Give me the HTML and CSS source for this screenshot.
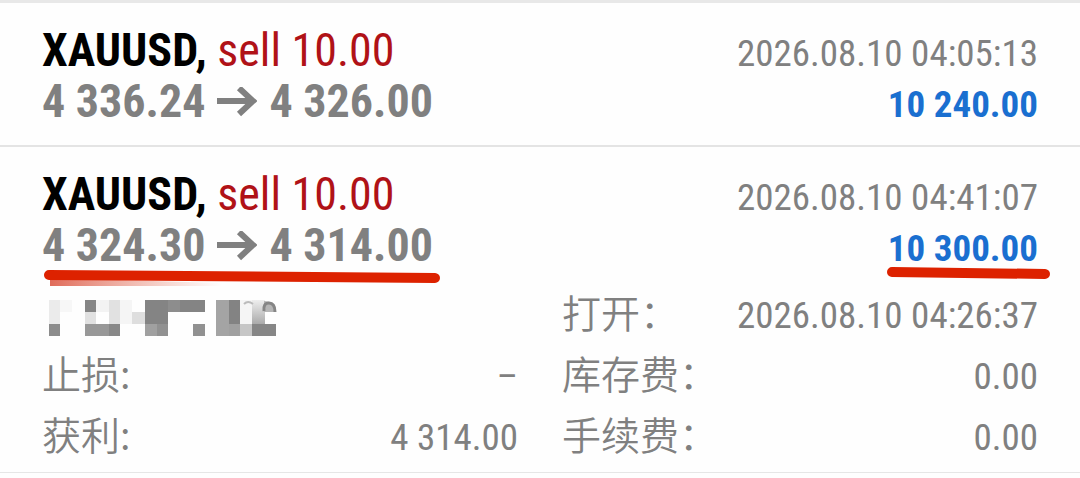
FILE: index.html
```html
<!DOCTYPE html>
<html lang="zh-CN">
<head>
    <meta charset="UTF-8">
    <meta name="viewport" content="width=device-width, initial-scale=1">
    <title>XAUUSD</title>
    <link rel="stylesheet" href="styles.css">
</head>
<body>
    <main class="history">
        <article class="deal">
            <div class="deal-row">
                <div class="symbol">XAUUSD, <span class="side">sell 10.00</span></div>
                <time class="date">2026.08.10 04:05:13</time>
            </div>
            <div class="deal-row">
                <div class="prices">
                    <span>4 336.24</span>
                    <svg class="arrow" viewBox="0 0 40 30" aria-hidden="true"><path d="M0 14H36M22 1L36 14L22 27"/></svg>
                    <span>4 326.00</span>
                </div>
                <div class="profit">10 240.00</div>
            </div>
        </article>
        <article class="deal">
            <div class="deal-row">
                <div class="symbol">XAUUSD, <span class="side">sell 10.00</span></div>
                <time class="date">2026.08.10 04:41:07</time>
            </div>
            <div class="deal-row">
                <div class="prices">
                    <span>4 324.30</span>
                    <svg class="arrow" viewBox="0 0 40 30" aria-hidden="true"><path d="M0 14H36M22 1L36 14L22 27"/></svg>
                    <span>4 314.00</span>
                    <svg class="mark mark-prices" viewBox="0 0 400 20" aria-hidden="true">
                        <defs>
                            <linearGradient id="fade">
                                <stop offset="0" stop-color="#d63a22" stop-opacity=".75"/>
                                <stop offset="1" stop-color="#e06a50" stop-opacity="0"/>
                            </linearGradient>
                        </defs>
                        <path d="M8 8L180 13V16L8 16Z" fill="url(#fade)"/>
                        <path d="M7 5L393 8" class="stroke"/>
                    </svg>
                </div>
                <div class="profit">
                    10 300.00
                    <svg class="mark mark-profit" viewBox="0 0 164 14" aria-hidden="true"><path d="M4 5L157 7" class="stroke"/></svg>
                </div>
            </div>
            <div class="details">
                <div class="detail">
                    <!-- hidden ticket number -->
                    <svg class="mosaic" viewBox="0 -4 235 40" aria-hidden="true">
                        <defs>
                            <linearGradient id="tile" x2="0" y2="1">
                                <stop offset="0" stop-color="#eee"/>
                                <stop offset="1" stop-color="#aaa"/>
                            </linearGradient>
                        </defs>
                        <g shape-rendering="crispEdges">
                            <path fill="#ebebeb" d="M7 0h11v24H7z"/>
                            <path fill="#f7f7f7" d="M18 0h12v12H18z"/>
                            <path fill="#8c8c8c" d="M7 24h11v12H7z"/>
                            <path fill="#858585" d="M43 0h11v12H43z"/>
                            <path fill="#f3f3f3" d="M54 0h13v12H54z"/>
                            <path fill="#e1e1e1" d="M43 12h11v12H43zM67 0h11v24H67z"/>
                            <path fill="#989898" d="M43 24h24v12H43z"/>
                            <path fill="#888" d="M67 24h11v12H67z"/>
                            <path fill="#f5f5f5" d="M78 0h12v24H78z"/>
                            <path fill="#dedede" d="M90 12h13v12H90z"/>
                            <path fill="#848484" d="M103 0h60v12h-37v12h-23z"/>
                            <path fill="#8d8d8d" d="M126 0h12v12h-12z"/>
                            <path fill="#a0a0a0" d="M103 24h12v12h-12z"/>
                            <path fill="#919191" d="M115 24h11v12h-11zM151 24h12v12h-12z"/>
                            <path fill="#a4a4a4" d="M174 0h13v36h-13z"/>
                            <path fill="#838383" d="M187 0h11v24h-11z"/>
                            <path fill="#a0a0a0" d="M187 24h11v12h-11z"/>
                            <path fill="#f5f5f5" d="M198 0h12v24h-12z"/>
                            <path fill="#c6c6c6" d="M198 24h12v12h-12z"/>
                            <path fill="url(#tile)" d="M210 0h13v24h-13z"/>
                            <path fill="#868686" d="M210 24h24v12h-24z"/>
                        </g>
                        <path fill="none" stroke="#bbb" stroke-width="2" d="M202 4q4-4 9 0"/>
                        <path fill="#b5b5b5" d="M222 1q11 0 12 11h-12z"/>
                        <path fill="none" stroke="#858585" stroke-width="3" d="M222 11q-1-8 5-8t6 9"/>
                    </svg>
                </div>
                <div class="detail">
                    <span class="label">打开：</span>
                    <time>2026.08.10 04:26:37</time>
                </div>
                <div class="detail">
                    <span class="label">止损:</span>
                    <span>–</span>
                </div>
                <div class="detail">
                    <span class="label">库存费：</span>
                    <span>0.00</span>
                </div>
                <div class="detail">
                    <span class="label">获利:</span>
                    <span>4 314.00</span>
                </div>
                <div class="detail">
                    <span class="label">手续费：</span>
                    <span>0.00</span>
                </div>
            </div>
        </article>
    </main>
</body>
</html>
```

FILE: styles.css
```css
body {
    margin: 0;
    background: #fefefe;
    color: #808080;
    font-family: "Roboto Condensed", "Liberation Sans Narrow", "Noto Sans CJK SC", sans-serif;
    font-size: 37px;
}
.history {
    border-top: 3px solid #e8e8e8;
}
.deal {
    padding: 22px 42px 18px;
    border-bottom: 2px solid #e4e4e4;
}
.deal:last-child {
    padding-bottom: 4px;
    border-bottom: 1px solid #e6e6e6;
}
.deal-row {
    display: flex;
    justify-content: space-between;
    align-items: baseline;
    line-height: 51px;
}
.symbol,
.prices {
    font-size: 46px;
    font-weight: bold;
    white-space: nowrap;
}
.symbol {
    color: #000;
}
.side {
    color: #b01217;
    font-weight: normal;
}
.prices {
    position: relative;
    display: flex;
    align-items: baseline;
    gap: 12px;
}
.arrow {
    width: 40px;
    height: 30px;
    fill: none;
    stroke: #808080;
    stroke-width: 6;
}
.date,
.profit {
    line-height: 40px;
}
.profit {
    position: relative;
    color: #1a6fd0;
    font-weight: bold;
}
/* hand-drawn underlines lie over the text */
.mark {
    position: absolute;
    overflow: visible;
}
.mark-prices {
    left: 0;
    top: 50px;
    width: 400px;
    height: 20px;
}
.mark-profit {
    right: -14px;
    top: 38px;
    width: 164px;
    height: 14px;
}
.stroke {
    fill: none;
    stroke: #dd2200;
    stroke-width: 10;
    stroke-linecap: round;
}
.details {
    display: grid;
    grid-template-columns: 1fr 1fr;
    column-gap: 44px;
    margin-top: 14px;
    line-height: 61px;
}
.detail {
    display: flex;
    justify-content: space-between;
    align-items: baseline;
    height: 61px;
}
.label {
    font-family: "Noto Sans CJK SC", sans-serif;
    font-size: 39px;
    font-weight: 350;
    line-height: 50px;
}
.mosaic {
    align-self: center;
    width: 235px;
    height: 40px;
}
```
